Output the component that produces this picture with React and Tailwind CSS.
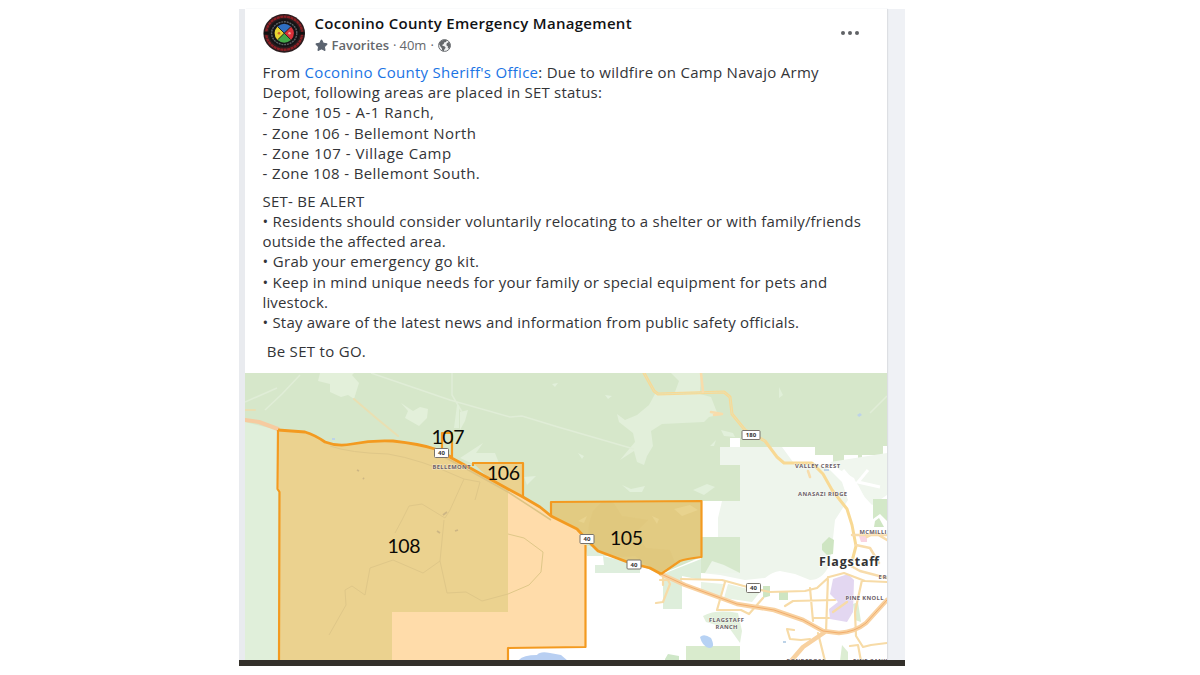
import { Star } from 'lucide-react';
import { clsx } from 'clsx';

const FONT = "font-['Open_Sans','Noto_Sans',sans-serif]";

const INTRO = [
  { t: 'Depot, following areas are placed in SET status:', cls: 'tracking-[0.22px]' },
  { t: '- Zone 105 - A-1 Ranch,', cls: 'tracking-[0.52px]' },
  { t: '- Zone 106 - Bellemont North', cls: 'tracking-[0.4px]' },
  { t: '- Zone 107 - Village Camp', cls: 'tracking-[0.52px]' },
  { t: '- Zone 108 - Bellemont South.', cls: 'tracking-[0.38px]' },
];

const ADVICE = [
  { t: 'SET- BE ALERT', cls: 'tracking-[0.26px]' },
  {
    t: '• Residents should consider voluntarily relocating to a shelter or with family/friends',
    cls: 'tracking-[0.215px]',
  },
  { t: 'outside the affected area.', cls: 'tracking-[0.17px]' },
  { t: '• Grab your emergency go kit.', cls: 'tracking-[0.34px]' },
  {
    t: '• Keep in mind unique needs for your family or special equipment for pets and',
    cls: 'tracking-[0.235px]',
  },
  { t: 'livestock.', cls: 'tracking-[0.15px]' },
  {
    t: '• Stay aware of the latest news and information from public safety officials.',
    cls: 'tracking-[0.2px]',
  },
];

const ZONES = [
  { id: '107', x: 448, y: 443.5 },
  { id: '106', x: 503.5, y: 480 },
  { id: '105', x: 626.5, y: 545 },
  { id: '108', x: 404, y: 553 },
];

const SHIELDS = [
  { n: '40', x: 441.5, y: 453 },
  { n: '40', x: 587, y: 539 },
  { n: '40', x: 634, y: 564.5 },
  { n: '40', x: 753.5, y: 588 },
  { n: '180', x: 751, y: 435 },
];

const PLACES = [
  { t: 'BELLEMONT', x: 451.5, y: 468.5, w: 38 },
  { t: 'VALLEY CREST', x: 817.5, y: 468, w: 45 },
  { t: 'ANASAZI RIDGE', x: 822.5, y: 496, w: 49 },
  { t: 'MCMILLI', x: 873, y: 533.5, w: 27 },
  { t: 'PINE KNOLL', x: 864.5, y: 599.5, w: 38 },
  { t: 'FLAGSTAFF', x: 726.5, y: 622, w: 35 },
  { t: 'RANCH', x: 726.5, y: 628.5, w: 22 },
  { t: 'PONDEROSA', x: 806, y: 662.5, w: 39 },
  { t: 'PINE CANY', x: 870, y: 662.5, w: 34 },
  { t: 'E R', x: 882.5, y: 578.5, w: 8 },
];

function Seal() {
  return (
    <svg viewBox="0 0 42 40" className="w-[42px] h-10 shrink-0">
      <ellipse cx="21.2" cy="20.400" rx="20.800" ry="19.400" fill="#2a1c1e" />
      <ellipse cx="21.2" cy="20.200" rx="18" ry="16.600" fill="none" stroke="#8c1f24" strokeWidth="2.400" strokeDasharray="3 0.5" />
      <ellipse cx="21.2" cy="20.200" rx="15.400" ry="14" fill="#141416" />
      <ellipse cx="21.2" cy="20.200" rx="12.600" ry="11.400" fill="none" stroke="#5d6064" strokeWidth="1.400" strokeDasharray="2 0.8" />
      <path d="M1 20.200H6M36.500 20.200H41.500" stroke="#111" strokeWidth="3" />
      <path d="M21.2 20.200 14.500 13.500Q21.200 8 28 13.500Z" fill="#2f6fc0" />
      <path d="M21.2 20.200 28 13.500Q34 20.200 28 27Z" fill="#d9303a" />
      <path d="M21.2 20.200 28 27Q21.200 32.500 14.500 27Z" fill="#43a948" />
      <path d="M21.2 20.200 14.500 27Q8.500 20.200 14.500 13.500Z" fill="#e6d432" />
      <path d="m15 14 12.500 12.500M27.500 14 15 26.500" stroke="#2b3020" strokeWidth="1" />
      <circle cx="16" cy="20.200" r="1.300" fill="#c9682c" />
      <circle cx="26.500" cy="20.200" r="1.200" fill="#f1a79c" />
    </svg>
  );
}

function Globe() {
  return (
    <svg viewBox="0 0 14 14" className="w-[13px] h-[13px]">
      <circle cx="7" cy="7" r="6.400" fill="#f0f1f2" stroke="#65686c" strokeWidth="1" />
      <path
        d="M1 5.500Q2.500 1.200 7 0.800 8.800 0.800 9.800 1.400L8.600 3.200 6.600 3.800 6.200 5.400 4.400 6.400 5 7.400 7.400 8 8.200 9.400 6.800 11.400 6.400 13.200Q4.800 13 4.200 12.200L4.300 10.200 2.600 8.200Z"
        fill="#65686c"
      />
      <path d="M9.400 4.600 11.600 3.200 13.200 5.600 13.300 8.200 12 10.600 10.600 9.600 10.700 8 9 6.800Z" fill="#65686c" />
    </svg>
  );
}

function Terrain() {
  return (
    <>
      <path d="M245 373H887V661H245Z" fill="#d6e7ca" />
      {/* open land south and east of the forest */}
      <path d="M245 422 278 430V661H245Z" fill="#e0efda" />
      <path d="M585 545 605 552 661 574 701 557V501H740V465H720V447H730V438H740V447H815V455H833V463H844V455H858V463H862V455H883V446H887V661H508V648H585Z" fill="#fff" />
      <path d="M720 447H782L793 462H812L830 470 842 482 848 500 835 520 832 548 829 566Q822 580 810 580L795 574 780 571Q772 572 765 578L745 580 720 575 701 573 718 537V501H740V465H720Z" fill="#eef5ec" />
      <path d="M830 462 887 453V495L872 505 861 493 854 478 840 470Z" fill="#f0f6ee" />
      <path d="M843 470 857 486 867 505M868 470 858 482 880 487" fill="none" stroke="#fff" strokeWidth="3" />
      <path d="M873 499H887V521L880 514 873 519Z" fill="#d3e8c8" />
      <path d="M703 501H722L718 518V537H703Z" fill="#fff" />
      <path d="M701 537H740V573H701Z" fill="#d6e8cc" />
      <path d="M705 573 712 561 724 565 740 573Z" fill="#ecf5e9" />
      <path d="M585 545 607 553V556H587Z M603 556 640 565V573H595V565H604Z" fill="#deeedd" />
      <path d="M663 574 701 559V580L682 576V609H663Z" fill="#deeedb" />
      <path d="M686 646H740V661H686Z" fill="#d9ebcd" />
      <path d="M665 659 668 654 679 656V661H665Z" fill="#cfe7c8" />
      <path d="M701 582 723 584 720 598 701 590ZM728 584 760 592 752 602 724 598Z" fill="#e8f3e4" />
      <path d="M703 616Q716 609 738 613L742 631 740 643 730 629 706 622Z" fill="#e2f0dc" />
      <path d="m822 544 7-7 5 3-1 14-6 1-5-5ZM779 592h9v8h-9ZM763 586h7v10l-7 2ZM875 521l4-3 5 9h-10Z" fill="#cee5c2" />
      <path d="m842 645 6 7v9h-8ZM853 604l5-2 3 20-6-2Z" fill="#dcedd2" />
      {/* clearings in the forest */}
      <path d="M320 373 318 381 330 384 330 392 341 397 348 395 354 399 359 383 352 375 354 373ZM401 403 408 411 405 418 419 426 427 418 428 409 420 407 413 411Z" fill="#e3f0da" />
      <path d="M655 394 649 405 637 415 625 420 617 414 619 422 633 433 635 442 620 460 634 451 637 462 644 465 647 456 653 446 651 431 662 424 704 422 709 417 718 415 711 397 700 394ZM671 373 679 381 675 392H700L701 373ZM460 412 468 410 465 421 460 430ZM460 458 483 443 476 453 495 453 499 463H471Z" fill="#e2efda" />
      <path d="M552 384 558 383 555 387ZM605 395 612 396 608 399ZM578 453 584 456 582 459ZM622 485 631 489 645 486 642 492 630 492ZM524 477 536 476 527 485ZM721 430 733 433 735 437 724 436ZM693 490 707 484 715 487 704 495ZM710 446 716 440 714 446Z" fill="#e2f0db" />
      <path d="M245 402 277 388M265 410 282 394 300 375M371 373 450 400 510 417 522 416 558 427 634 449M452 373V395L462 412M870 413 887 396" fill="none" stroke="#e0edd7" strokeWidth="1.500" />
      <path d="M457 405H459V428H454ZM779 387l4 8-4 3" fill="#e0efd8" />
      <path d="M518 661Q522 655 537 655 540 651 550 653L561 655 568 661Z" fill="#b8cff2" />
      <path d="M700 637Q704 633 711 638 716 648 709 648 702 646 700 637Z" fill="#b7d2f4" />
      <path d="m857 415 3-2 2 2-3 2ZM824 469h5v2h-5ZM332 438h3v2h-3ZM783 641h3v2h-3Z" fill="#bdd3e8" />
      {/* campus */}
      <path d="M833 579 848 574 854 580 853 612 847 622 830 619 829 609 838 602 830 594Z" fill="#e3d7f1" />
      <path d="M859 536h8v6h-6Z" fill="#f9d4e0" />
    </>
  );
}

function Roads() {
  return (
    <g fill="none" strokeLinejoin="round" strokeLinecap="round">
      <path d="M354 399 375 417 398 436M245 410H255" stroke="#e9dfb2" strokeWidth="2" />
      <path d="M644 373 654 391 658 394 724 392 730 397 732 414 745 430 765 441 777 457 784 463 812 463 823 474 832 490 847 509 852 525 856 546 851 565" stroke="#f8d994" strokeWidth="3" />
      <path d="M644 373 654 391 658 394 724 392 730 397 732 414 745 430 765 441" stroke="#e3e2b8" strokeWidth="0.800" />
      <path d="M701 373 703 392M711 412 722 414 714 415M808 471 810 477M852 535H887M856 545 870 548 879 563M867 537 875 533 887 540M849 565 860 571 887 578" stroke="#f8dcab" strokeWidth="2.500" />
      <path d="M681 579 722 580 751 588 770 592 805 591 817 588 829 577 844 573 865 581 887 582M725 582 717 610H741L749 614 763 598M785 606 793 601 835 600M810 588 813 621M828 577 826 632M862 580 855 612 856 636 863 647 871 645 887 643M818 633 825 661M794 630 787 629 790 639 801 640 810 639M813 618H829M663 577V585M660 580H668L670 584 663 602 656 603M850 646 858 645 861 661M833 612 847 602" stroke="#f7dba7" strokeWidth="2.200" />
      <path d="M661 574 685 585 737 604 774 610 803 620 823 631 839 633Q855 632 866 623L887 600M825 632 803 647 791 661" stroke="#f8d1a0" strokeWidth="4.500" />
      <path d="M661 574 685 585 737 604 774 610 803 620 823 631 839 633Q855 632 866 623L887 600" stroke="#f2ad6c" strokeWidth="1" />
      <path d="M245 420 259 422 278 429" stroke="#f6cba0" strokeWidth="4" />
    </g>
  );
}

function Zones() {
  return (
    <>
      <path d="M278 430 305 432Q315 435 325 442 338 447 352 444 372 440 393 441 420 444 435 449L472 469 508 489 523 497 540 507 551 516 577 529 585.500 540V647L508 648V661H279V490L277.500 489Z" fill="#ffdcaa" />
      <path d="M278 430 305 432Q315 435 325 442 338 447 352 444 372 440 393 441 420 444 435 449L472 469 508 489V612H392V661H279V490Z" fill="#ebd28f" />
      <path d="M551 502 701.500 501V557Q685 559 680 561L661 574 650 568 630 563 597 551 587 540 577 529 551 516Z" fill="#e2cb82" />
      <path d="M602 502 593 511 589 524 588 538 599 551 622 557 635 556 648 566 660 572 675 563 670 550 646 548 635 533 648 520 622 516 613 502Z" fill="#dfc67b" opacity="0.600" />
      <path d="M578 521 587 516 584 523ZM652 516 659 519 657 524ZM674 509 690 505 698 510 682 516Z" fill="#e8d38e" />
      <path d="M473 463H523V497L490 479Z" fill="#ebd28f" />
      <g fill="none">
        <path d="M330 446Q350 453 388 454 420 459 464 479M464 479 450 510 445 518 422 504 409 506 402 520 395 533M464 479 480 482 475 500M329 635 346 605 345 590 352 586 365 595 370 568 393 560 423 573 440 561 444 520M440 561 447 593 466 592 482 601 508 594 529 585 541 572 543 552 524 538 508 534" stroke="#dfc788" strokeWidth="1" />
        <path d="m357 470 2 1m4 7 1 1m73 52 3 2m15-2 3-1m-15-15 4-3" stroke="#cdb684" strokeWidth="1.800" />
        <path d="M435 452 472 472 508 492 551 520" stroke="#dcc384" strokeWidth="1.500" />
      </g>
      <g fill="none" stroke="#f39a20" strokeWidth="2.200" strokeLinejoin="round">
        <path d="M508 661V648L585.500 647V545M279 661 279.500 492 277.500 489 278 430" />
        <path d="M278 430 305 432Q315 435 325 442 338 447 352 444 372 440 393 441 420 444 435 449L472 469 508 489 523 497 540 507 551 516 577 529 587 540 598 551 630 563 650 568 661 574" strokeWidth="2.800" />
        <path d="M551 516V502L701.500 501V557Q685 559 680 561L661 574" />
        <path d="M473 466V463H523V497M442 449V433H452V457L442 452" />
      </g>
    </>
  );
}

function ZoneMap() {
  return (
    <svg viewBox="245 373 642 288" className="block w-[642px] h-[288px] font-['Open_Sans',sans-serif]">
      <Terrain />
      <Roads />
      <Zones />
      {PLACES.map((p) => (
        <text
          key={p.t}
          x={p.x}
          y={p.y}
          textLength={p.w}
          textAnchor="middle"
          fontSize="5.8"
          fontWeight="700"
          fill="#6b5e66"
          stroke="#fff"
          strokeOpacity="0.5"
          strokeWidth="1"
          paintOrder="stroke"
        >
          {p.t}
        </text>
      ))}
      <text x="849" y="566" textLength="60" textAnchor="middle" fontSize="12.500" fontWeight="700" fill="#333" stroke="#fff" strokeWidth="1.500" paintOrder="stroke">
        Flagstaff
      </text>
      {SHIELDS.map((s) => {
        const w = s.n.length > 2 ? 18 : 14;
        return (
          <g key={s.x}>
            <rect x={s.x - w / 2} y={s.y - 4.5} width={w} height="9" rx="1" fill="#fff" stroke="#77736c" />
            <text x={s.x} y={s.y + 2.2} textAnchor="middle" fontSize="6" fontWeight="700" fill="#333">
              {s.n}
            </text>
          </g>
        );
      })}
      <g className="font-['Lato',sans-serif]" fontSize="19.500" textAnchor="middle" fill="#0c0a05">
        {ZONES.map((z) => (
          <text key={z.id} x={z.x} y={z.y} textLength="33">
            {z.id}
          </text>
        ))}
      </g>
    </svg>
  );
}

function Lines({ items }) {
  return items.map((line) => (
    <p key={line.t} className={line.cls}>
      {line.t}
    </p>
  ));
}

export default function App() {
  return (
    <div className={clsx('w-[1200px] h-[675px] bg-white pt-[9px] pl-[239px] overflow-hidden', FONT)}>
      <div className="w-[666px] h-[657px] flex flex-col">
        <div className="flex h-[651px] bg-[#eff1f5]">
          <div className="w-[6px] shrink-0 bg-[#e9ebef]" />
          <article className="w-[642px] h-[651px] overflow-hidden bg-white shadow-[1px_0_1px_#dddfe3]">
            <header className="flex h-[53px] pl-[18px] pt-1 pr-7">
              <Seal />
              <div className="ml-[9.5px] flex-1 whitespace-nowrap">
                <h1 className="text-[15px] leading-[21px] font-semibold tracking-[0.29px] text-[#111214]">
                  Coconino County Emergency Management
                </h1>
                <div className="flex items-center text-[13px] leading-[22px] text-[#65686c]">
                  <Star className="w-[13px] h-[13px] mr-1 fill-[#5b6470] text-[#5b6470]" />
                  <span className="font-semibold">Favorites</span>
                  <span className="mx-1">·</span>
                  <span className="-ml-px">40m</span>
                  <span className="mx-1">·</span>
                  <Globe />
                </div>
              </div>
              <div className="flex gap-[3px] pt-[18px]">
                <i className="w-1 h-1 rounded-full bg-[#606266]" />
                <i className="w-1 h-1 rounded-full bg-[#606266]" />
                <i className="w-1 h-1 rounded-full bg-[#606266]" />
              </div>
            </header>

            <div className="h-[311px] pl-[17.5px] text-[15px] leading-[20.2px] text-[#333437] whitespace-pre">
              <p className="tracking-[0.28px]">
                From <a className="text-[#1b74e4]">Coconino County Sheriff's Office</a>: Due to wildfire on Camp Navajo Army
              </p>
              <Lines items={INTRO} />
              <div className="mt-[7.6px]">
                <Lines items={ADVICE} />
              </div>
              <p className="mt-[8.4px] tracking-[0.3px]"> Be SET to GO.</p>
            </div>

            <ZoneMap />
          </article>
        </div>
        <div className="h-[6px] bg-[#33302a]" />
      </div>
    </div>
  );
}
